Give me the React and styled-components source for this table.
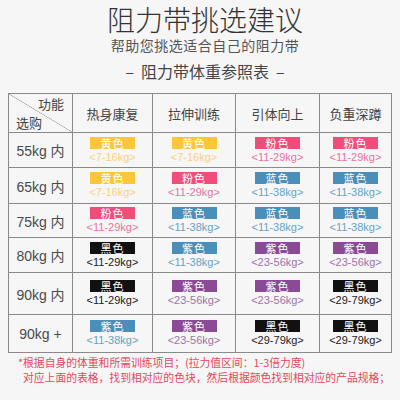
import React from "react";
import styled, { createGlobalStyle } from "styled-components";

const Global = createGlobalStyle`
  html, body { margin: 0; padding: 0; background: #f6f6f6; }
  body { font-family: "Noto Sans CJK SC", "Noto Sans", sans-serif; }
`;

const Page = styled.div`
  width: 400px;
  height: 400px;
  overflow: hidden;
  display: flex;
  flex-direction: column;
  align-items: center;
  background: #f6f6f6;
`;

const Header = styled.header`
  display: flex;
  flex-direction: column;
  align-items: center;
  padding-left: 10px;
`;

const Title = styled.h1`
  margin: 2px 0 0;
  font-size: 28px;
  line-height: 34px;
  font-weight: 300;
  color: #333;
`;

const Subtitle = styled.div`
  font-size: 14px;
  line-height: 18px;
  letter-spacing: 0.5px;
  color: #555;
`;

const Heading = styled.div`
  margin-top: 5px;
  font-size: 16px;
  line-height: 24px;
  color: #444;
  display: flex;
  gap: 7px;
`;

const Table = styled.div`
  margin-top: 10px;
  align-self: flex-start;
  margin-left: 8px;
  display: grid;
  grid-template-columns: 64px 80px 83px 84px 72px;
  grid-template-rows: 39px 35px 36px 34px 35px 42px 38px;
  border-top: 1px solid #8a8a8a;
  border-left: 1px solid #8a8a8a;
`;

const Cell = styled.div`
  box-sizing: border-box;
  border-right: 1px solid #8a8a8a;
  border-bottom: 1px solid #8a8a8a;
  display: flex;
  flex-direction: column;
  align-items: center;
  justify-content: center;
  color: #444;
`;

const CornerCell = styled(Cell)`
  align-items: stretch;
  justify-content: flex-start;
  padding: 1px 8px 0 7px;
  gap: 1px;
  font-size: 13px;
  line-height: 18px;
  background: linear-gradient(
    to top right,
    transparent calc(50% - 0.6px),
    #a0a0a0 50%,
    transparent calc(50% + 0.6px)
  );
`;

const CornerTop = styled.span`
  text-align: right;
`;

const CornerBottom = styled.span`
  text-align: left;
`;

const HeadCell = styled(Cell)`
  font-size: 13px;
`;

const RowLabel = styled(Cell)`
  font-family: "Liberation Sans", "Noto Sans CJK SC", sans-serif;
  font-size: 14px;
  color: #4a4a4a;
`;

const palette = {
  yellow: { bg: "#fdc63a", text: "#f7d27d" },
  pink: { bg: "#f24c7b", text: "#e6739e" },
  blue: { bg: "#4a8fb9", text: "#67a2c2" },
  purple: { bg: "#8a4a95", text: "#9c73ab" },
  black: { bg: "#111111", text: "#222222" },
};

const Badge = styled.div`
  width: 45px;
  height: 12px;
  line-height: 12px;
  font-size: 11px;
  text-align: center;
  color: #fff;
  letter-spacing: 1px;
  background: ${(p) => palette[p.$tone].bg};
`;

const Range = styled.div`
  margin-top: 1px;
  font-family: "Liberation Sans", sans-serif;
  font-size: 11px;
  line-height: 14px;
  color: ${(p) => palette[p.$tone].text};
`;

const Footer = styled.div`
  align-self: flex-start;
  margin: 2px 0 0 18px;
  font-size: 10.8px;
  line-height: 15px;
  color: #e5485a;
`;

const FooterLine = styled.div`
  padding-left: ${(p) => p.$indent || 0}px;
  white-space: nowrap;
`;

const heads = ["热身康复", "拉伸训练", "引体向上", "负重深蹲"];

const rows = [
  {
    label: "55kg 内",
    cells: [
      ["黄色", "<7-16kg>", "yellow"],
      ["黄色", "<7-16kg>", "yellow"],
      ["粉色", "<11-29kg>", "pink"],
      ["粉色", "<11-29kg>", "pink"],
    ],
  },
  {
    label: "65kg 内",
    cells: [
      ["黄色", "<7-16kg>", "yellow"],
      ["粉色", "<11-29kg>", "pink"],
      ["蓝色", "<11-38kg>", "blue"],
      ["蓝色", "<11-38kg>", "blue"],
    ],
  },
  {
    label: "75kg 内",
    cells: [
      ["粉色", "<11-29kg>", "pink"],
      ["蓝色", "<11-38kg>", "blue"],
      ["蓝色", "<11-38kg>", "blue"],
      ["蓝色", "<11-38kg>", "blue"],
    ],
  },
  {
    label: "80kg 内",
    cells: [
      ["黑色", "<11-29kg>", "black"],
      ["紫色", "<11-38kg>", "blue"],
      ["紫色", "<23-56kg>", "purple"],
      ["紫色", "<23-56kg>", "purple"],
    ],
  },
  {
    label: "90kg 内",
    cells: [
      ["黑色", "<11-29kg>", "black"],
      ["紫色", "<23-56kg>", "purple"],
      ["紫色", "<23-56kg>", "purple"],
      ["黑色", "<29-79kg>", "black"],
    ],
  },
  {
    label: "90kg +",
    cells: [
      ["紫色", "<11-38kg>", "blue"],
      ["紫色", "<23-56kg>", "purple"],
      ["黑色", "<29-79kg>", "black"],
      ["黑色", "<29-79kg>", "black"],
    ],
  },
];

export default function App() {
  return (
    <Page>
      <Global />
      <Header>
        <Title>阻力带挑选建议</Title>
        <Subtitle>帮助您挑选适合自己的阻力带</Subtitle>
        <Heading>
          <span>–</span>
          <span>阻力带体重参照表</span>
          <span>–</span>
        </Heading>
      </Header>
      <Table>
        <CornerCell>
          <CornerTop>功能</CornerTop>
          <CornerBottom>选购</CornerBottom>
        </CornerCell>
        {heads.map((h) => (
          <HeadCell key={h}>{h}</HeadCell>
        ))}
        {rows.map((r) => (
          <React.Fragment key={r.label}>
            <RowLabel>{r.label}</RowLabel>
            {r.cells.map(([name, range, tone], i) => (
              <Cell key={i}>
                <Badge $tone={tone}>{name}</Badge>
                <Range $tone={tone}>{range}</Range>
              </Cell>
            ))}
          </React.Fragment>
        ))}
      </Table>
      <Footer>
        <FooterLine>*根据自身的体重和所需训练项目；(拉力值区间：1-3倍力度)</FooterLine>
        <FooterLine $indent={5}>
          对应上面的表格，找到相对应的色块，然后根据颜色找到相对应的产品规格；
        </FooterLine>
      </Footer>
    </Page>
  );
}
